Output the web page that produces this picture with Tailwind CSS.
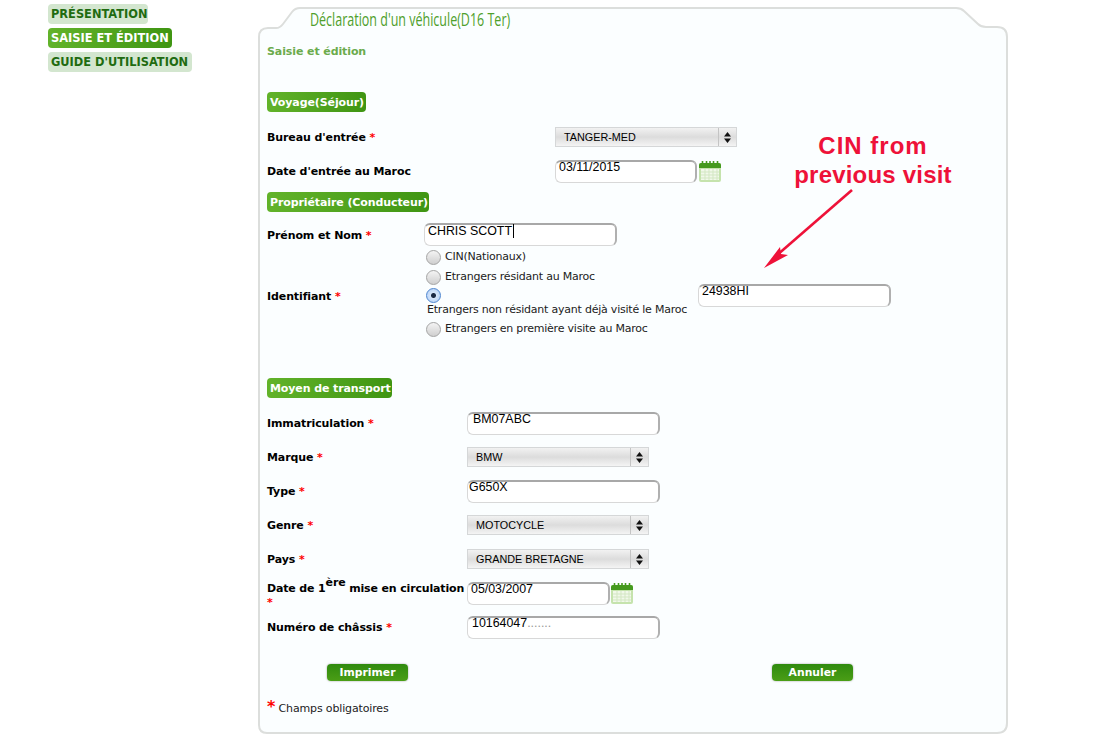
<!DOCTYPE html>
<html lang="fr">
<head>
    <meta charset="UTF-8">
    <title>Déclaration d'un véhicule(D16 Ter)</title>
    <script src="https://cdn.jsdelivr.net/npm/@tailwindcss/browser@4"></script>
</head>
<body class="bg-white text-[11px] text-black font-['DejaVu_Sans',sans-serif] overflow-hidden">

    <div class="relative flex w-[1096px] h-[755px] pl-[48px] pt-[4px]">

        <!-- left nav -->
        <nav class="w-[210px] shrink-0 flex flex-col items-start gap-[4px] font-bold text-[11.4px] whitespace-nowrap">
            <a class="h-[20px] w-[100px] pl-[3px] leading-[21px] rounded-[4px] bg-[#d3e6cf] text-[#1f6b10]">PRÉSENTATION</a>
            <a class="h-[20px] w-[124px] pl-[3px] leading-[21px] rounded-[4px] bg-linear-to-r from-[#62b32a] to-[#3f9512] text-white">SAISIE ET ÉDITION</a>
            <a class="h-[20px] w-[144px] pl-[3px] leading-[21px] rounded-[4px] bg-[#d3e6cf] text-[#1f6b10]">GUIDE D'UTILISATION</a>
        </nav>

        <!-- main panel -->
        <main class="relative w-[750px] h-[727px] mt-[3px] pl-[9px]">
            <svg class="absolute left-0 top-0" width="750" height="727" viewBox="0 0 750 727" fill="#fbfeff" stroke="#dcdedc" stroke-width="2">
                <path d="M9,726 Q1,726 1,718 L1,30 Q1,21 10,21 L18,21 Q22,21 25,17 L34,5 Q37,1 42,1 L698,1 Q703,1 706,4 L720,17 Q723,20 728,20 L739,20 Q749,20 749,30 L749,716 Q749,726 739,726 Z"/>
            </svg>

            <div class="relative">
                <div class="h-[24px] pl-[43px] leading-[24px]">
                    <h1 class="inline-block origin-left scale-x-[.658] font-['Open_Sans',sans-serif] text-[19px] font-normal whitespace-nowrap text-[#4f9f2c]">Déclaration d'un véhicule(D16 Ter)</h1>
                </div>
                <h2 class="mt-[12px] h-[16px] leading-[17px] tracking-[-.1px] font-bold text-[#6bab4c]">Saisie et édition</h2>

                <!-- voyage -->
                <div class="mt-[33px] h-[20px] w-[99px] pl-[3px] leading-[21px] rounded-[4px] bg-linear-to-r from-[#62b32a] to-[#3f9512] tracking-[-.1px] font-bold text-white whitespace-nowrap">Voyage(Séjour)</div>

                <div class="mt-[8px] h-[34px] flex items-center">
                    <label class="w-[288px] pt-[3px] tracking-[-.1px] font-bold">Bureau d'entrée <span class="text-[#f00]">*</span></label>
                    <div class="flex w-[182px] h-[20px] border border-[#d5d7d8] bg-linear-to-b from-[#f2f2f2] via-[#dcdcdc] to-[#f4f4f4] font-['Liberation_Sans',sans-serif] text-[10.8px] leading-[18px]">
                        <span class="flex-1 pl-[8px]">TANGER-MED</span>
                        <span class="w-[18px] border-l border-[#c4c4c4] flex items-center justify-center">
                            <svg width="7" height="11" viewBox="0 0 7 11" fill="#111"><path d="M3.5 0 7 4.4H0Z M0 6.6H7L3.5 11Z"/></svg>
                        </span>
                    </div>
                </div>

                <div class="h-[34px] flex items-center">
                    <label class="w-[288px] pt-[3px] tracking-[-.1px] font-bold">Date d'entrée au Maroc</label>
                    <div class="w-[142px] h-[23px] pl-[3px] rounded-[6px] border border-[#d8d8d8] border-t-[#a8a8a8] border-r-[#b0b0b0] border-r-2 border-t-2 bg-white font-['Liberation_Sans',sans-serif] text-[12.4px] leading-[11px]">03/11/2015</div>
                    <svg class="ml-[2px]" width="22" height="21" viewBox="0 0 22 21">
                        <rect x="0" y="2" width="22" height="19" rx="2" fill="#c5e3ad"/>
                        <rect x="2" y="8" width="18" height="11" fill="#f1f8ea"/>
                        <path d="M0 4a2 2 0 0 1 2-2h18a2 2 0 0 1 2 2v3H0Z" fill="#459a1e"/>
                        <path d="M3.5 0v4M7.5 0v4M11 0v4M14.5 0v4M18.5 0v4" stroke="#459a1e" stroke-width="1.6"/>
                        <path d="M2 11h18M2 14h18M2 17h18M6 8v11M10 8v11M14 8v11M18 8v11" stroke="#d3e7c3" stroke-width="1"/>
                    </svg>
                </div>

                <!-- proprietaire -->
                <div class="mt-[4px] h-[20px] w-[162px] pl-[3px] leading-[21px] rounded-[4px] bg-linear-to-r from-[#62b32a] to-[#3f9512] tracking-[-.1px] font-bold text-white whitespace-nowrap">Propriétaire (Conducteur)</div>

                <div class="mt-[6px] h-[29px] pt-[5px] flex items-start">
                    <label class="w-[157px] leading-[26px] tracking-[-.1px] font-bold">Prénom et Nom <span class="text-[#f00]">*</span></label>
                    <div class="w-[193px] h-[23px] pl-[3px] rounded-[6px] border border-[#d8d8d8] border-t-[#a8a8a8] border-r-[#b0b0b0] border-r-2 border-t-2 bg-white font-['Liberation_Sans',sans-serif] text-[12.4px] leading-[12px]">
                        <span class="border-r border-black pr-px">CHRIS SCOTT</span>
                    </div>
                </div>

                <div class="h-[92px] flex items-center">
                    <label class="w-[157px] mt-[8px] tracking-[-.1px] font-bold">Identifiant <span class="text-[#f00]">*</span></label>
                    <div class="w-[274px] tracking-[-.22px] text-[#222] whitespace-nowrap">
                        <div class="h-[20px] pt-px flex items-center gap-[4px]">
                            <input type="radio" name="ident" class="appearance-none size-[15px] ml-[2px] rounded-full border border-[#a4a4a4] bg-linear-to-b from-[#f4f4f4] to-[#cfcfcf]"><span>CIN(Nationaux)</span>
                        </div>
                        <div class="h-[20px] pt-px flex items-center gap-[4px]">
                            <input type="radio" name="ident" class="appearance-none size-[15px] ml-[2px] rounded-full border border-[#a4a4a4] bg-linear-to-b from-[#f4f4f4] to-[#cfcfcf]"><span>Etrangers résidant au Maroc</span>
                        </div>
                        <div class="h-[32px] pt-px">
                            <input type="radio" name="ident" checked class="block appearance-none size-[15px] ml-[2px] rounded-full border border-[#4f86cf] bg-[radial-gradient(circle,#1b2a44_0_2px,#d6e6fb_3px,#a9c9f3_100%)]">
                            <div class="pl-[3px] leading-[14px]">Etrangers non résidant ayant déjà visité le Maroc</div>
                        </div>
                        <div class="h-[20px] pt-px flex items-center gap-[4px]">
                            <input type="radio" name="ident" class="appearance-none size-[15px] ml-[2px] rounded-full border border-[#a4a4a4] bg-linear-to-b from-[#f4f4f4] to-[#cfcfcf]"><span>Etrangers en première visite au Maroc</span>
                        </div>
                    </div>
                    <div class="mt-[5px] w-[193px] h-[23px] pl-[3px] rounded-[6px] border border-[#d8d8d8] border-t-[#a8a8a8] border-r-[#b0b0b0] border-r-2 border-t-2 bg-white font-['Liberation_Sans',sans-serif] text-[12.4px] leading-[11px]">24938HI</div>
                </div>

                <!-- transport -->
                <div class="mt-[39px] h-[20px] w-[125px] pl-[3px] leading-[21px] rounded-[4px] bg-linear-to-r from-[#62b32a] to-[#3f9512] tracking-[-.1px] font-bold text-white whitespace-nowrap">Moyen de transport</div>

                <div class="mt-[8px] h-[34px] flex items-center">
                    <label class="w-[200px] pt-[3px] tracking-[-.1px] font-bold">Immatriculation <span class="text-[#f00]">*</span></label>
                    <div class="w-[193px] h-[23px] pl-[5px] rounded-[6px] border border-[#d8d8d8] border-t-[#a8a8a8] border-r-[#b0b0b0] border-r-2 border-t-2 bg-white font-['Liberation_Sans',sans-serif] text-[12.4px] leading-[11px]">BM07ABC</div>
                </div>

                <div class="h-[34px] flex items-center">
                    <label class="w-[200px] pt-[3px] tracking-[-.1px] font-bold">Marque <span class="text-[#f00]">*</span></label>
                    <div class="flex w-[182px] h-[20px] border border-[#d5d7d8] bg-linear-to-b from-[#f2f2f2] via-[#dcdcdc] to-[#f4f4f4] font-['Liberation_Sans',sans-serif] text-[10.8px] leading-[18px]">
                        <span class="flex-1 pl-[8px]">BMW</span>
                        <span class="w-[18px] border-l border-[#c4c4c4] flex items-center justify-center">
                            <svg width="7" height="11" viewBox="0 0 7 11" fill="#111"><path d="M3.5 0 7 4.4H0Z M0 6.6H7L3.5 11Z"/></svg>
                        </span>
                    </div>
                </div>

                <div class="h-[34px] flex items-center">
                    <label class="w-[200px] pt-[3px] tracking-[-.1px] font-bold">Type <span class="text-[#f00]">*</span></label>
                    <div class="w-[193px] h-[23px] pl-[1px] rounded-[6px] border border-[#d8d8d8] border-t-[#a8a8a8] border-r-[#b0b0b0] border-r-2 border-t-2 bg-white font-['Liberation_Sans',sans-serif] text-[12.4px] leading-[11px]">G650X</div>
                </div>

                <div class="h-[34px] flex items-center">
                    <label class="w-[200px] pt-[3px] tracking-[-.1px] font-bold">Genre <span class="text-[#f00]">*</span></label>
                    <div class="flex w-[182px] h-[20px] border border-[#d5d7d8] bg-linear-to-b from-[#f2f2f2] via-[#dcdcdc] to-[#f4f4f4] font-['Liberation_Sans',sans-serif] text-[10.8px] leading-[18px]">
                        <span class="flex-1 pl-[8px]">MOTOCYCLE</span>
                        <span class="w-[18px] border-l border-[#c4c4c4] flex items-center justify-center">
                            <svg width="7" height="11" viewBox="0 0 7 11" fill="#111"><path d="M3.5 0 7 4.4H0Z M0 6.6H7L3.5 11Z"/></svg>
                        </span>
                    </div>
                </div>

                <div class="h-[34px] flex items-center">
                    <label class="w-[200px] pt-[3px] tracking-[-.1px] font-bold">Pays <span class="text-[#f00]">*</span></label>
                    <div class="flex w-[182px] h-[20px] border border-[#d5d7d8] bg-linear-to-b from-[#f2f2f2] via-[#dcdcdc] to-[#f4f4f4] font-['Liberation_Sans',sans-serif] text-[10.8px] leading-[18px]">
                        <span class="flex-1 pl-[8px]">GRANDE BRETAGNE</span>
                        <span class="w-[18px] border-l border-[#c4c4c4] flex items-center justify-center">
                            <svg width="7" height="11" viewBox="0 0 7 11" fill="#111"><path d="M3.5 0 7 4.4H0Z M0 6.6H7L3.5 11Z"/></svg>
                        </span>
                    </div>
                </div>

                <div class="h-[34px] flex items-center">
                    <label class="w-[200px] mt-[5px] tracking-[-.15px] font-bold leading-[14px] whitespace-nowrap">Date de 1<sup class="text-[11px] leading-[0]">ère</sup> mise en circulation<br><span class="text-[#f00]">*</span></label>
                    <div class="w-[143px] h-[23px] pl-[3px] rounded-[6px] border border-[#d8d8d8] border-t-[#a8a8a8] border-r-[#b0b0b0] border-r-2 border-t-2 bg-white font-['Liberation_Sans',sans-serif] text-[12.4px] leading-[11px]">05/03/2007</div>
                    <svg class="ml-px" width="22" height="21" viewBox="0 0 22 21">
                        <rect x="0" y="2" width="22" height="19" rx="2" fill="#c5e3ad"/>
                        <rect x="2" y="8" width="18" height="11" fill="#f1f8ea"/>
                        <path d="M0 4a2 2 0 0 1 2-2h18a2 2 0 0 1 2 2v3H0Z" fill="#459a1e"/>
                        <path d="M3.5 0v4M7.5 0v4M11 0v4M14.5 0v4M18.5 0v4" stroke="#459a1e" stroke-width="1.6"/>
                        <path d="M2 11h18M2 14h18M2 17h18M6 8v11M10 8v11M14 8v11M18 8v11" stroke="#d3e7c3" stroke-width="1"/>
                    </svg>
                </div>

                <div class="h-[34px] flex items-center">
                    <label class="w-[200px] pt-[3px] tracking-[-.1px] font-bold">Numéro de châssis <span class="text-[#f00]">*</span></label>
                    <div class="w-[193px] h-[23px] pl-[4px] rounded-[6px] border border-[#d8d8d8] border-t-[#a8a8a8] border-r-[#b0b0b0] border-r-2 border-t-2 bg-white font-['Liberation_Sans',sans-serif] text-[12.4px] leading-[11px]">10164047<span class="text-[#999]">.......</span></div>
                </div>

                <!-- buttons -->
                <div class="mt-[20px] h-[17px] flex pl-[60px] font-bold text-[10.8px] text-white">
                    <button class="w-[81px] h-[17px] leading-[16px] rounded-[4px] bg-linear-to-b from-[#2f8a0e] to-[#4a9e16] shadow-[0_0_2px_#9a9a9a]">Imprimer</button>
                    <button class="ml-[364px] w-[81px] h-[17px] leading-[16px] rounded-[4px] bg-linear-to-b from-[#2f8a0e] to-[#4a9e16] shadow-[0_0_2px_#9a9a9a]">Annuler</button>
                </div>

                <p class="mt-[18px] h-[16px] leading-[16px] tracking-[-.15px] text-[#222]"><span class="text-[16px] font-bold text-[#f00]">*</span> Champs obligatoires</p>
            </div>
        </main>

        <!-- annotation over the page -->
        <div class="absolute left-[773px] top-[131px] w-[200px] text-center font-['Liberation_Sans',sans-serif] font-bold text-[24px] leading-[29px] text-[#ee1239]"><span class="tracking-[1px]">CIN from</span><br><span class="tracking-[.2px]">previous visit</span></div>
        <svg class="absolute left-[760px] top-[185px]" width="100" height="90" viewBox="0 0 100 90">
            <path d="M92 5 16 71" stroke="#ee1239" stroke-width="2.6" fill="none"/>
            <path d="M4 83 20 62 21 69 28 70Z" fill="#ee1239"/>
        </svg>
    </div>
</body>
</html>
